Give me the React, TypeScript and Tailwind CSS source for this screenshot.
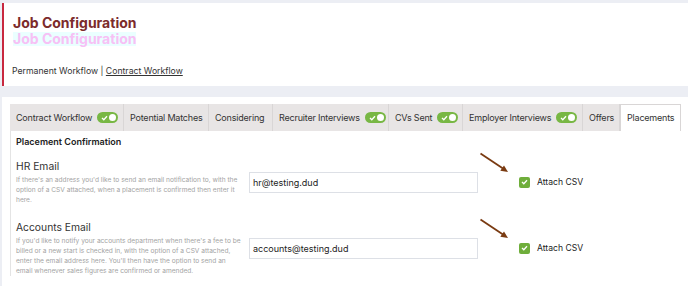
import React from "react";

const font = { fontFamily: "Inter, 'Open Sans', sans-serif" };

function Toggle() {
  return (
    <span className="ml-[5px] inline-flex h-[11px] w-[21px] shrink-0 items-center justify-between rounded-full bg-[#78b744] px-[2px]">
      <svg width="7" height="6" viewBox="0 0 7 6" className="ml-[2px]">
        <path d="M1 3 L2.8 4.7 L6 1.2" stroke="#fff" strokeWidth="1.3" fill="none" />
      </svg>
      <span className="h-[7px] w-[7px] rounded-full bg-white" />
    </span>
  );
}

const tabs: { label: string; w: number; toggle?: boolean; active?: boolean }[] = [
  { label: "Contract Workflow", w: 114, toggle: true },
  { label: "Potential Matches", w: 85 },
  { label: "Considering", w: 64 },
  { label: "Recruiter Interviews", w: 116, toggle: true },
  { label: "CVs Sent", w: 74, toggle: true },
  { label: "Employer Interviews", w: 120, toggle: true },
  { label: "Offers", w: 37 },
  { label: "Placements", w: 61, active: true },
];

function Arrow() {
  return (
    <svg width="32" height="22" viewBox="0 0 32 22" className="absolute left-[-39px] top-[-24px] overflow-visible">
      <line x1="0.5" y1="0.5" x2="23" y2="15.5" stroke="#7a3b12" strokeWidth="1.8" />
      <path d="M28 19 L20.3 17.8 L24 12.4 Z" fill="#7a3b12" />
    </svg>
  );
}

function Check() {
  return (
    <span className="relative flex h-[11px] w-[11px] items-center justify-center rounded-[2px] bg-[#6fae3b]">
      <Arrow />
      <svg width="7" height="6" viewBox="0 0 7 6">
        <path d="M1 3 L2.8 4.7 L6 1.2" stroke="#fff" strokeWidth="1.3" fill="none" />
      </svg>
    </span>
  );
}

function Row({ title, lines, value }: { title: string; lines: string[]; value: string }) {
  return (
    <div className="flex items-center">
      <div className="w-[233px] shrink-0">
        <div className="whitespace-nowrap text-[10.3px] leading-[14px] text-[#333]">{title}</div>
        <div className="mt-[2px] text-[6.6px] leading-[10px] text-[#a3a3a3]">
          {lines.map((l, i) => (
            <div key={i} className="whitespace-nowrap">
              {l}
            </div>
          ))}
        </div>
      </div>
      <div className="flex items-center pt-[1px]">
        <div className="flex h-[21px] w-[229px] items-center whitespace-nowrap border border-[#dde0e6] pl-[3px] text-[9px] text-[#222]">
          {value}
        </div>
        <div className="ml-[41px] flex items-center gap-[7px]">
          <Check />
          <span className="whitespace-nowrap text-[8.6px] text-[#222]">Attach CSV</span>
        </div>
      </div>
    </div>
  );
}

export default function App() {
  return (
    <div style={font} className="h-[286px] w-[688px] overflow-hidden bg-[#eceef4]">
      <div className="ml-[2px] mt-[3px] flex h-[83px] border-l-[2px] border-[#c8283f] bg-white">
        <div className="pl-[9px] pt-[11px]">
          <div className="whitespace-nowrap text-[14px] font-bold leading-[18px] text-[#7c2b2b]">Job Configuration</div>
          <div className="w-fit whitespace-nowrap bg-[#eaffff] text-[14px] font-bold leading-[14px] text-[#f7c0f5]">
            Job Configuration
          </div>
          <div className="-ml-[1px] mt-[19px] whitespace-nowrap text-[8.7px] leading-[12px] text-[#333]">
            Permanent Workflow | <span className="underline">Contract Workflow</span>
          </div>
        </div>
      </div>
      <div className="ml-[2px] mt-[11px] h-[200px] bg-white pl-[8px] pt-[7px]">
        <div className="flex h-[27px]">
          {tabs.map((t) => (
            <div
              key={t.label}
              style={{ width: t.w }}
              className={
                "flex shrink-0 items-center overflow-hidden whitespace-nowrap border-r border-[#d9d6d6] pl-[6px] text-[9px] tracking-[-0.2px] text-[#333] " +
                (t.active ? "border-l border-t bg-white" : "bg-[#e8e5e5]")
              }
            >
              {t.label}
              {t.toggle && <Toggle />}
            </div>
          ))}
        </div>
        <div className="border-l border-[#e4e4e4] pl-[5px] pt-[5px]">
          <div className="whitespace-nowrap text-[9px] font-semibold leading-[12px] text-[#222]">Placement Confirmation</div>
          <div className="mt-[11px]">
            <Row
              title="HR Email"
              value="hr@testing.dud"
              lines={[
                "If there's an address you'd like to send an email notification to, with the",
                "option of a CSV attached, when a placement is confirmed then enter it",
                "here.",
              ]}
            />
          </div>
          <div className="mt-[15px]">
            <Row
              title="Accounts Email"
              value="accounts@testing.dud"
              lines={[
                "If you'd like to notify your accounts department when there's a fee to be",
                "billed or a new start is checked in, with the option of a CSV attached,",
                "enter the email address here. You'll then have the option to send an",
                "email whenever sales figures are confirmed or amended.",
              ]}
            />
          </div>
        </div>
      </div>
    </div>
  );
}
